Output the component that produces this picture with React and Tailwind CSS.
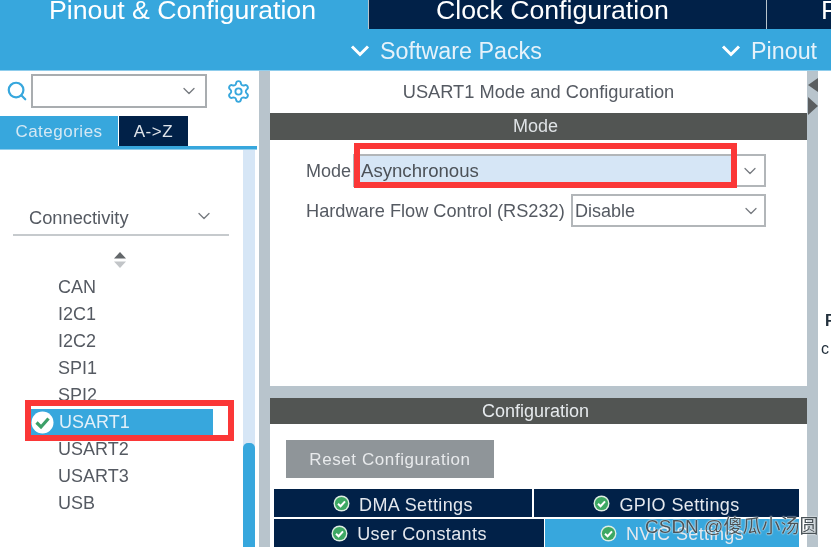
import { Search, Settings, ChevronDown } from 'lucide-react'

const items = ['CAN', 'I2C1', 'I2C2', 'SPI1', 'SPI2']
const itemsAfter = ['USART2', 'USART3', 'USB']

function TabCheck() {
  return (
    <svg width="17" height="17" viewBox="0 0 17 17" className="shrink-0">
      <circle cx="8.5" cy="8.5" r="8" fill="#dfeee4" />
      <circle cx="8.5" cy="8.5" r="6.6" fill="#3da863" />
      <path d="M5 8.7 L7.6 11.2 L12 6.4" fill="none" stroke="#fff" strokeWidth="2" />
    </svg>
  )
}

function ListCheck() {
  return (
    <svg width="23" height="23" viewBox="0 0 23 23" className="shrink-0">
      <circle cx="11.5" cy="11.5" r="11" fill="#fff" />
      <path d="M5.5 11.5 L10 16 L17.5 7.5" fill="none" stroke="#3da068" strokeWidth="3.2" />
    </svg>
  )
}

function BarChevron() {
  return (
    <svg width="20" height="14" viewBox="0 0 20 14" className="shrink-0">
      <path d="M2 2.5 L10 10.5 L18 2.5" fill="none" stroke="#fff" strokeWidth="3" />
    </svg>
  )
}

function SettingsTab({ label, className, textClass }) {
  return (
    <div className={`flex items-center justify-center gap-[9px] text-[18px] tracking-[0.4px] text-[#e4e8ee] ${className}`}>
      <TabCheck />
      <span className={textClass}>{label}</span>
    </div>
  )
}

export default function App() {
  return (
    <div className="relative w-[831px] h-[547px] overflow-hidden blur-[0.4px] bg-white text-[18px] text-[#555a62] font-['Liberation_Sans',Arial,sans-serif]">
      {/* Top tabs */}
      <div className="flex h-[29px] bg-[#37a7dd] text-[26.7px] leading-[20px] text-white overflow-hidden">
        <div className="w-[368px] shrink-0 pl-[49px] whitespace-nowrap">Pinout &amp; Configuration</div>
        <div className="w-[398px] shrink-0 pl-[67px] border-l border-[#b8c4cc] bg-[#012148] whitespace-nowrap">Clock Configuration</div>
        <div className="flex-1 pl-[54px] border-l border-[#b8c4cc] bg-[#012148]">P</div>
      </div>
      {/* Second bar */}
      <div className="flex items-center h-[42px] pt-[3px] pl-[350px] bg-[#37a7dd] text-[23.3px] text-[#e6f2fa] border-b border-[#8fcdec]">
        <BarChevron />
        <span className="ml-[10px] w-[341px]">Software Packs</span>
        <BarChevron />
        <span className="ml-[10px]">Pinout</span>
      </div>

      <div className="flex h-[476px]">
        {/* Left panel */}
        <div className="flex flex-col w-[259px] shrink-0">
          <div className="flex items-center h-[37px] pt-[3px] pl-[6px]">
            <Search size={22} strokeWidth={2.4} className="text-[#37a7dd] shrink-0" />
            <div className="flex items-center justify-end w-[176px] h-[34px] ml-[3px] pr-[6px] border-2 border-[#a9adb0]">
              <ChevronDown size={20} strokeWidth={1.6} className="text-[#777b80]" />
            </div>
            <Settings size={25} strokeWidth={1.8} className="ml-[19px] text-[#37a7dd]" />
          </div>
          <div className="flex h-[38px] pt-[8px] items-stretch">
            <div className="flex items-center justify-center w-[118px] pt-[2px] bg-[#37a7dd] text-[17px] tracking-[0.5px] text-[#d4e8f4]">Categories</div>
            <div className="flex items-center justify-center w-[69px] ml-px pt-[2px] bg-[#012148] text-[17px] tracking-[0.6px] text-[#dfe4ea]">A-&gt;Z</div>
          </div>
          <div className="h-[4px] w-[257px] bg-[#37a7dd] border-b border-[#8fcdec]" />
          <div className="flex flex-1 min-h-0">
            <div className="w-[243px] shrink-0 overflow-hidden">
              <div className="flex items-center justify-between h-[27px] mt-[54px] ml-[13px] mr-[14px] pl-[16px] pr-[15px] text-[18.3px]">
                <span>Connectivity</span>
                <ChevronDown size={20} strokeWidth={1.6} className="text-[#777b80] -translate-y-[2px]" />
              </div>
              <div className="h-[2px] ml-[13px] mr-[14px] mt-[3px] bg-[#c6cacd]" />
              <svg width="14" height="17" viewBox="0 0 14 17" className="ml-[113px] mt-[16px]">
                <path d="M7 0 L13 6.5 L1 6.5 Z" fill="#63676a" />
                <path d="M7 16 L13 9.5 L1 9.5 Z" fill="#c2c5c8" />
              </svg>
              <div className="mt-[5px] pl-[58px]">
                {items.map(name => (
                  <div key={name} className="h-[27px] leading-[27px]">{name}</div>
                ))}
              </div>
              <div className="flex items-center w-[182px] h-[27px] ml-[31px] bg-[#37a7dd] text-[#e2f0f9]">
                <ListCheck />
                <span className="ml-[5px]">USART1</span>
              </div>
              <div className="pl-[58px]">
                {itemsAfter.map(name => (
                  <div key={name} className="h-[27px] leading-[27px]">{name}</div>
                ))}
              </div>
            </div>
            <div className="flex flex-col justify-end w-[12px] bg-[#d6e6f6]">
              <div className="h-[104px] rounded-t-[5px] bg-[#37a7dd]" />
            </div>
          </div>
        </div>

        {/* Center panels */}
        <div className="flex flex-col w-[559px] shrink-0 px-[11px] bg-[#b8c4cc]">
          <div className="flex flex-col h-[315px] w-[537px] bg-white">
            <div className="h-[42px] leading-[42px] text-center text-[18.25px]">USART1 Mode and Configuration</div>
            <div className="h-[27px] leading-[27px] pr-[6px] text-center bg-[#525553] text-[#dfe3e6]">Mode</div>
            <div className="flex items-center h-[33px] mt-[14px] pl-[36px]">
              <span className="w-[47px] pt-[1px]">Mode</span>
              <div className="flex items-stretch w-[413px] h-[33px] border-2 border-[#b2b6b9]">
                <div className="w-[378px] bg-[#d6e6f6] pl-[6px] leading-[29px] text-[18.6px] text-[#4c5157]">Asynchronous</div>
                <div className="flex items-center justify-center flex-1 pl-[3px]">
                  <ChevronDown size={20} strokeWidth={1.5} className="text-[#777b80]" />
                </div>
              </div>
            </div>
            <div className="flex items-center h-[33px] mt-[7px] pl-[36px]">
              <span className="w-[265px] pt-[2px] whitespace-nowrap text-[18.2px]">Hardware Flow Control (RS232)</span>
              <div className="flex items-center justify-between w-[195px] h-[33px] pl-[2px] pr-[2px] border-2 border-[#b2b6b9]">
                <span className="pt-[1px]">Disable</span>
                <ChevronDown size={20} strokeWidth={1.5} className="mr-[1px] text-[#777b80]" />
              </div>
            </div>
          </div>

          <div className="flex flex-col h-[149px] w-[537px] mt-[12px] bg-white">
            <div className="h-[27px] leading-[26px] pr-[6px] text-center bg-[#525553] text-[#e6eaed]">Configuration</div>
            <div className="flex items-center justify-center w-[208px] h-[39px] mt-[16px] ml-[16px] pt-[1px] bg-[#8f9599] text-[17px] tracking-[0.58px] text-[#e8eaec]">Reset Configuration</div>
            <div className="flex w-[525px] h-[28px] mt-[11px] ml-[4px] gap-[2px]">
              <SettingsTab label="DMA Settings" className="w-[258px] bg-[#012148]" textClass="pt-[4px]" />
              <SettingsTab label="GPIO Settings" className="flex-1 bg-[#012148]" textClass="pt-[4px]" />
            </div>
            <div className="flex w-[525px] h-[28px] mt-[2px] ml-[4px] gap-px">
              <SettingsTab label="User Constants" className="w-[270px] bg-[#012148]" textClass="pt-[3px]" />
              <SettingsTab label="NVIC Settings" className="flex-1 bg-[#37a7dd]" textClass="pt-[3px]" />
            </div>
          </div>
        </div>

        {/* Right edge */}
        <div className="flex-1 overflow-hidden">
          <div className="pl-[7px] pt-[240px] font-bold text-[16px] text-[#22303c] leading-[20px]">R</div>
          <div className="pl-[3px] pt-[8px] text-[16px] text-[#22303c] leading-[20px]">c</div>
        </div>
      </div>

      {/* Collapse arrows */}
      <svg width="11" height="38" viewBox="0 0 11 38" className="absolute left-[808px] top-[78px]">
        <path d="M10 0 L10 14 L0 7 Z" fill="#5b5e60" />
        <path d="M0 19 L0 37 L10 28 Z" fill="#5b5e60" />
      </svg>

      {/* Red annotation boxes */}
      <div className="absolute left-[25px] top-[400px] w-[209px] h-[41px] border-[6px] border-[#fb3737]" />
      <div className="absolute left-[354px] top-[143px] w-[383px] h-[45px] border-[6px] border-[#fb3737]" />

      {/* Watermark */}
      <div className="absolute left-[645px] top-[515px] text-[19px] leading-[24px] whitespace-nowrap text-[#4a5358] [text-shadow:0_0_2px_#fff,0_0_1px_#fff] font-['Liberation_Sans','Noto_Sans_CJK_SC',sans-serif]">CSDN @傻瓜小汤圆</div>
    </div>
  )
}
